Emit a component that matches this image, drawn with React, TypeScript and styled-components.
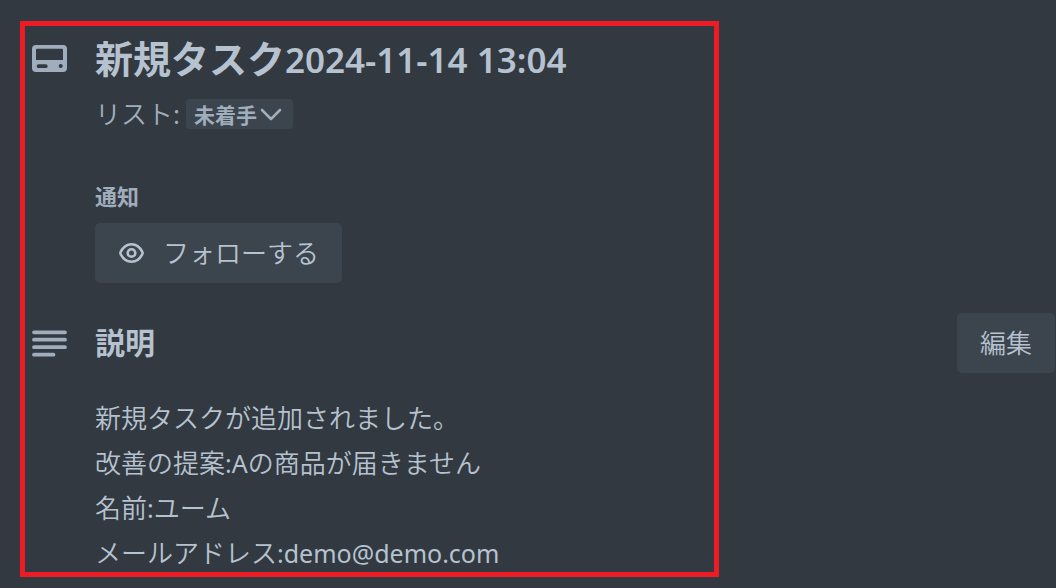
import React from "react";
import styled, { createGlobalStyle } from "styled-components";

const GlobalStyle = createGlobalStyle`
  * { box-sizing: border-box; }
  body {
    margin: 0;
    background: #323940;
    color: #b6c2cf;
    font-family: "Noto Sans CJK JP", sans-serif;
    font-size: 26px;
    font-weight: 350;
  }
`;

const Card = styled.main`
  position: relative;
  padding: 35px 1px 14px 32px;
`;

const Highlight = styled.div`
  position: absolute;
  inset: 21px 337px 11px 20px;
  border: 5px solid #ed1c24;
  pointer-events: none;
`;

const Row = styled.div`
  display: grid;
  grid-template-columns: 35px 1fr auto;
  column-gap: 28px;
  align-items: center;
`;

const Indented = styled.div`
  padding-left: 63px;
`;

const Icon = styled.svg`
  display: block;
  flex: none;
  color: #9fadbc;
`;

const EyeIcon = styled(Icon)`
  color: inherit;
  margin-top: 4px;
`;

const Title = styled.h1`
  margin: 0;
  font-size: 38px;
  line-height: 44px;
  font-weight: 700;
`;

const Latin = styled.span`
  font-family: "Noto Sans", sans-serif;
  font-size: 25px;
  font-weight: 400;
`;

const TitleLatin = styled(Latin)`
  font-size: 35px;
  font-weight: 600;
`;

const ListLine = styled.div`
  display: flex;
  align-items: center;
  gap: 6px;
  height: 30px;
  margin-top: 17px;
  color: #9fadbc;
`;

const ListLabel = styled.label`
  padding-bottom: 4px;
`;

const SelectBox = styled.div`
  position: relative;
  display: flex;
`;

const ListSelect = styled.select`
  appearance: none;
  height: 30px;
  padding: 0 36px 2px 8px;
  border: 0;
  border-radius: 4px;
  background: #3c444d;
  color: #9fadbc;
  font-family: inherit;
  font-size: 21px;
  font-weight: 700;
`;

const Chevron = styled(Icon)`
  position: absolute;
  right: 11px;
  top: 9px;
  pointer-events: none;
`;

const FieldLabel = styled.h2`
  margin: 51px 0 13px;
  font-size: 22px;
  line-height: 30px;
  font-weight: 700;
  color: #9fadbc;
`;

const Button = styled.button`
  display: flex;
  align-items: center;
  gap: 18px;
  height: 60px;
  padding: 0 23px 4px;
  border: 0;
  border-radius: 5px;
  background: #3c444d;
  color: #b6c2cf;
  font-family: inherit;
  font-size: 26px;
  font-weight: inherit;
`;

const SectionRow = styled(Row)`
  margin-top: 30px;
`;

const SectionTitle = styled.h2`
  margin: 0;
  padding-bottom: 4px;
  font-size: 30px;
  line-height: 40px;
  font-weight: 700;
`;

const Description = styled(Indented)`
  margin-top: 21px;
  line-height: 45px;

  p { margin: 0; height: 45px; }
`;

export default function App() {
  return (
    <>
      <GlobalStyle />
      <Card>
        <Row>
          <Icon width="35" height="27" viewBox="0 0 35 27" aria-hidden="true">
            <path
              fill="currentColor"
              fillRule="evenodd"
              d="M4 0H31A4 4 0 0 1 35 4V23A4 4 0 0 1 31 27H4A4 4 0 0 1 0 23V4A4 4 0 0 1 4 0ZM5 3.7A1 1 0 0 0 4 4.700V15H31V4.700A1 1 0 0 0 30 3.700ZM6.500 19.300A1.850 1.850 0 0 0 6.500 23H13.800A1.850 1.850 0 0 0 13.800 19.300ZM28.700 19A2 2 0 1 0 28.700 23A2 2 0 1 0 28.700 19Z"
            />
          </Icon>
          <Title>
            新規タスク<TitleLatin>2024-11-14 13:04</TitleLatin>
          </Title>
        </Row>
        <Indented>
          <ListLine>
            <ListLabel htmlFor="list">リスト:</ListLabel>
            <SelectBox>
              <ListSelect id="list" defaultValue="todo">
                <option value="todo">未着手</option>
              </ListSelect>
              <Chevron width="22" height="13" viewBox="0 0 22 13" aria-hidden="true">
                <path d="M2 2L11 11L20 2" fill="none" stroke="currentColor" strokeWidth="2.6" strokeLinecap="round" strokeLinejoin="round" />
              </Chevron>
            </SelectBox>
          </ListLine>
          <FieldLabel>通知</FieldLabel>
          <Button type="button">
            <EyeIcon width="27" height="22" viewBox="0 0 27 22" aria-hidden="true">
              <g fill="none" stroke="currentColor" strokeWidth="2.6">
                <path d="M2.800 9.600C5.200 5 9 2.200 13.500 2.200S21.800 5 24.200 9.600Q25 11 24.200 12.400C21.800 17 18 19.800 13.500 19.800S5.200 17 2.800 12.400Q2 11 2.800 9.600Z" />
                <circle cx="13.5" cy="11" r="3.8" />
              </g>
            </EyeIcon>
            フォローする
          </Button>
        </Indented>
        <SectionRow>
          <Icon width="35" height="27" viewBox="0 0 35 27" aria-hidden="true">
            <path d="M2 2.300H33M2 9.700H33M2 17.200H33M2 24.700H21.500" stroke="currentColor" strokeWidth="3.8" strokeLinecap="round" />
          </Icon>
          <SectionTitle>説明</SectionTitle>
          <Button type="button">編集</Button>
        </SectionRow>
        <Description>
          <p>新規タスクが追加されました。</p>
          <p>
            改善の提案<Latin>:A</Latin>の商品が届きません
          </p>
          <p>
            名前<Latin>:</Latin>ユーム
          </p>
          <p>
            メールアドレス<Latin>:demo@demo.com</Latin>
          </p>
        </Description>
        <Highlight />
      </Card>
    </>
  );
}
